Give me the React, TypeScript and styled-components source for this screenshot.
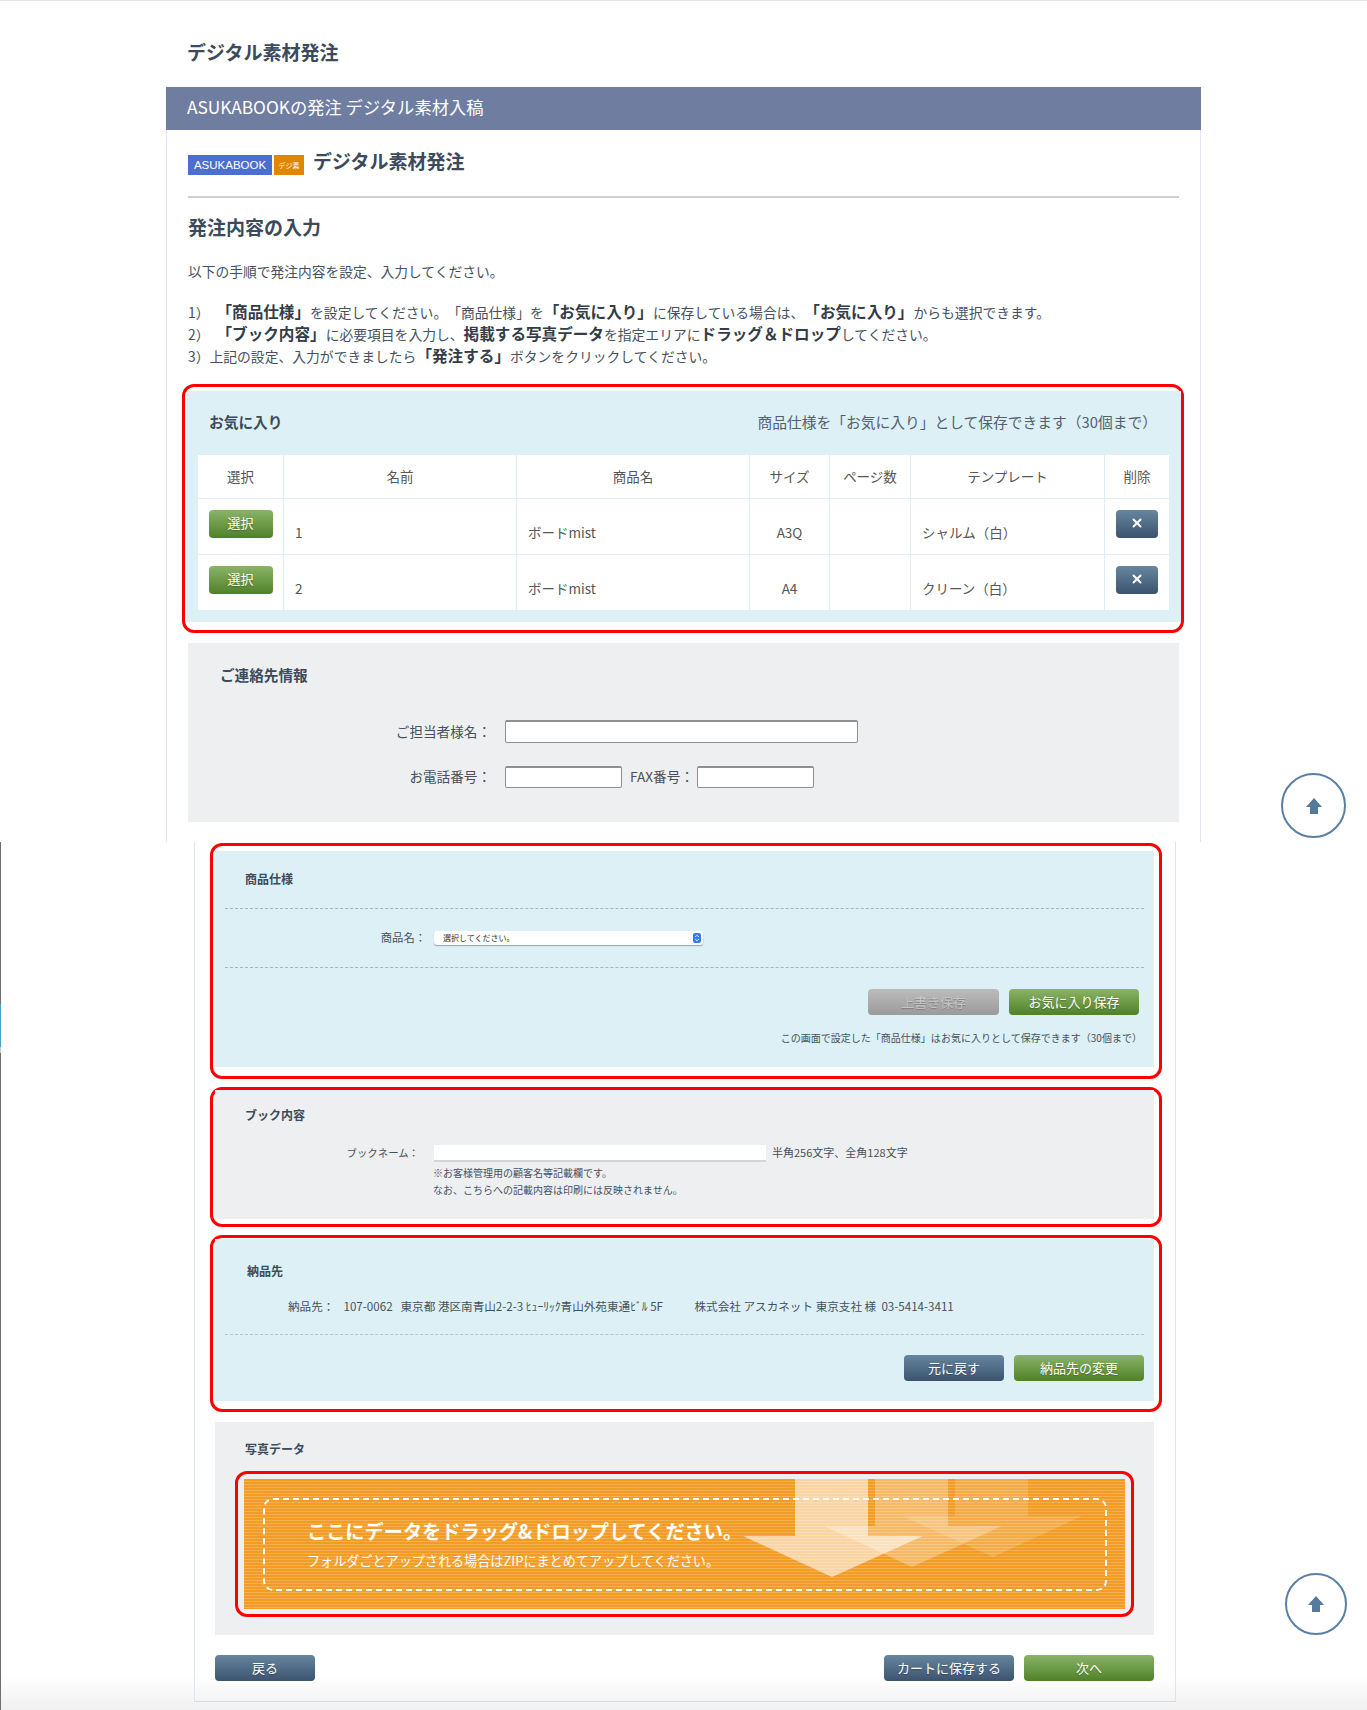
import React, { FC } from 'react';
import styled, { createGlobalStyle, css } from 'styled-components';
import { X } from 'lucide-react';

const GlobalStyle = createGlobalStyle`
  html, body {
    margin: 0;
    padding: 0;
    background: #fff;
  }
  body {
    font-family: "Noto Sans CJK JP", "Liberation Sans", sans-serif;
    color: #46505c;
    text-spacing-trim: space-all;
  }
`;

const tones = {
  green: css`background: linear-gradient(#8bb368, #4f8127); color: #fff;`,
  navy: css`background: linear-gradient(#66869f, #3c536f); color: #fff;`,
  gray: css`background: linear-gradient(#bcbcbc, #9a9a9a); color: #c6c6c6;`,
};

const App: FC = () => (
  <Page>
    <GlobalStyle />
    <SideSliver />
    <FirstSheet>
      <PageTitle>デジタル素材発注</PageTitle>
      <Banner>ASUKABOOKの発注 デジタル素材入稿</Banner>
      <FirstBody>
        <LogoRow>
          <LogoBlue>ASUKABOOK</LogoBlue>
          <LogoOrange>デジ素</LogoOrange>
          <LogoTitle>デジタル素材発注</LogoTitle>
        </LogoRow>
        <Rule />
        <SubTitle>発注内容の入力</SubTitle>
        <Intro>以下の手順で発注内容を設定、入力してください。</Intro>
        <Steps>
          <li>1）<b>「商品仕様」</b>を設定してください。「商品仕様」を<b>「お気に入り」</b>に保存している場合は、<b>「お気に入り」</b>からも選択できます。</li>
          <li>2）<b>「ブック内容」</b>に必要項目を入力し、<b>掲載する写真データ</b>を指定エリアに<b>ドラッグ＆ドロップ</b>してください。</li>
          <li>3）上記の設定、入力ができましたら<b>「発注する」</b>ボタンをクリックしてください。</li>
        </Steps>

        <FavouritesFrame>
          <FavouritesPanel>
            <FavouritesHead>
              <FavouritesTitle>お気に入り</FavouritesTitle>
              <FavouritesHint>商品仕様を「お気に入り」として保存できます（30個まで）</FavouritesHint>
            </FavouritesHead>
            <FavTable>
              <colgroup>
                {[86, 233, 233, 80, 81, 194, 65].map((w, i) => <col key={i} width={w} />)}
              </colgroup>
              <thead>
                <tr>
                  {['選択', '名前', '商品名', 'サイズ', 'ページ数', 'テンプレート', '削除'].map((h) => <th key={h}>{h}</th>)}
                </tr>
              </thead>
              <tbody>
                <FavRow no="1" size="A3Q" template="シャルム（白）" />
                <FavRow no="2" size="A4" template="クリーン（白）" />
              </tbody>
            </FavTable>
          </FavouritesPanel>
        </FavouritesFrame>

        <ContactPanel>
          <ContactTitle>ご連絡先情報</ContactTitle>
          <ContactRow $h={23}>
            <ContactLabel>ご担当者様名：</ContactLabel>
            <TextBox $w={353} />
          </ContactRow>
          <ContactRow $h={22}>
            <ContactLabel>お電話番号：</ContactLabel>
            <TextBox $w={117} />
            <FaxLabel>FAX番号：</FaxLabel>
            <TextBox $w={117} />
          </ContactRow>
        </ContactPanel>
      </FirstBody>
    </FirstSheet>

    <SecondSheet>
      <Frame $pad="5px 5px 9px 2px">
        <SpecPanel>
          <SpecTitle>商品仕様</SpecTitle>
          <Dashed />
          <SpecField>
            <FieldLabel $gap={8} $size={11.3}>商品名：</FieldLabel>
            <FakeSelect>
              選択してください。
              <SelectStepper viewBox="0 0 8 10">
                <rect width="8" height="10" rx="2" fill="#2f7ff0" />
                <path d="M2.2 4 4 2.2 5.8 4M2.2 6 4 7.8 5.8 6" fill="none" stroke="#fff" strokeWidth="0.9" />
              </SelectStepper>
            </FakeSelect>
          </SpecField>
          <Dashed />
          <ActionRow $top={21} $right={15}>
            <ActionButton $tone="gray" $w={131}>上書き保存</ActionButton>
            <ActionButton $tone="green" $w={130}>お気に入り保存</ActionButton>
          </ActionRow>
          <SpecNote>この画面で設定した「商品仕様」はお気に入りとして保存できます（30個まで）</SpecNote>
        </SpecPanel>
      </Frame>

      <Frame $pad="0 5px 5px 2px" $gap={8}>
        <BookPanel>
          <SpecTitle>ブック内容</SpecTitle>
          <BookField>
            <FieldLabel $gap={15} $size={10.4}>ブックネーム：</FieldLabel>
            <BookInput />
            <BookLimit>半角256文字、全角128文字</BookLimit>
          </BookField>
          <BookNotes>
            ※お客様管理用の顧客名等記載欄です。<br />
            なお、こちらへの記載内容は印刷には反映されません。
          </BookNotes>
        </BookPanel>
      </Frame>

      <Frame $pad="1px 5px 8px 2px" $gap={8}>
        <DeliveryPanel>
          <DeliveryTitle>納品先</DeliveryTitle>
          <AddressRow>
            <AddressPart $w={55.5}>納品先：</AddressPart>
            <AddressPart $w={57}>107-0062</AddressPart>
            <AddressPart $w={294}>東京都 港区南青山2-2-3 ﾋｭｰﾘｯｸ青山外苑東通ﾋﾞﾙ 5F</AddressPart>
            <AddressPart>株式会社 アスカネット 東京支社 様&nbsp;&nbsp;03-5414-3411</AddressPart>
          </AddressRow>
          <DottedLight />
          <ActionRow $top={20} $right={10}>
            <ActionButton $tone="navy" $w={100}>元に戻す</ActionButton>
            <ActionButton $tone="green" $w={130}>納品先の変更</ActionButton>
          </ActionRow>
        </DeliveryPanel>
      </Frame>

      <PhotoPanel>
        <SpecTitle>写真データ</SpecTitle>
        <DropFrame>
          <DropZone>
            <DropArrows viewBox="0 0 881 130">
              <polygon points="711,0 784,0 784,37 838,37 749,78 658,37 711,37" fill="#fff" opacity="0.16" />
              <polygon points="631,0 704,0 704,47 758,47 668,88 580,47 631,47" fill="#fff" opacity="0.3" />
              <polygon points="551,0 624,0 624,57 679,57 588,98 499,57 551,57" fill="#fff" opacity="0.58" />
            </DropArrows>
            <DropBorder>
              <DropTitle>ここにデータをドラッグ&amp;ドロップしてください。</DropTitle>
              <DropSub>フォルダごとアップされる場合はZIPにまとめてアップしてください。</DropSub>
            </DropBorder>
          </DropZone>
        </DropFrame>
      </PhotoPanel>

      <FooterButtons>
        <ActionButton $tone="navy" $w={100}>戻る</ActionButton>
        <FooterRight>
          <ActionButton $tone="navy" $w={130}>カートに保存する</ActionButton>
          <ActionButton $tone="green" $w={130}>次へ</ActionButton>
        </FooterRight>
      </FooterButtons>
    </SecondSheet>

    <ScrollTop $top={772} $left={1281} $size={65}><UpArrow /></ScrollTop>
    <ScrollTop $top={1572} $left={1285} $size={62}><UpArrow /></ScrollTop>
  </Page>
);

const FavRow: FC<{ no: string; size: string; template: string }> = ({ no, size, template }) => (
  <tr>
    <ButtonCell><SmallButton $tone="green" $w={64}>選択</SmallButton></ButtonCell>
    <td>{no}</td>
    <td>ボードmist</td>
    <CenterCell>{size}</CenterCell>
    <td />
    <td>{template}</td>
    <ButtonCell><SmallButton $tone="navy" $w={42}><X size={14} strokeWidth={3.4} /></SmallButton></ButtonCell>
  </tr>
);

const UpArrow: FC = () => (
  <svg width="16" height="16" viewBox="0 0 16 16">
    <polygon points="8,0 16,9 12,9 12,16 4,16 4,9 0,9" fill="#55799f" />
  </svg>
);

const Page = styled.div`
  position: relative;
  width: 1367px;
  height: 1710px;
  overflow: hidden;
  box-sizing: border-box;
  border-top: 1px solid #e4e4e4;
  background: linear-gradient(to bottom, #fff 1675px, #f0f0f0 1710px);
`;

const SideSliver = styled.div`
  position: absolute;
  left: 0;
  top: 841px;
  width: 1px;
  height: 869px;
  background: linear-gradient(to bottom, #707070 162px, #4a9fc9 162px, #4a9fc9 205px, #ccc 205px, #ccc 211px, #707070 211px);
`;

const FirstSheet = styled.div`
  margin-left: 166px;
  width: 1035px;
  height: 841px;
  display: flex;
  flex-direction: column;
`;

const PageTitle = styled.h1`
  margin: 0;
  height: 86px;
  box-sizing: border-box;
  padding: 37px 0 0 21px;
  font-size: 19px;
  line-height: 28px;
  font-weight: 700;
  color: #3b4a5c;
`;

const Banner = styled.div`
  height: 43px;
  padding-left: 21px;
  background: #6f7da1;
  color: #fff;
  font-size: 17.3px;
  line-height: 40px;
`;

const FirstBody = styled.div`
  flex: 1;
  padding: 0 21px;
  border-left: 1px solid #e2e7ee;
  border-right: 1px solid #e2e7ee;
`;

const LogoRow = styled.div`
  display: flex;
  height: 66px;
  padding-top: 19px;
  box-sizing: border-box;
`;

const LogoBlue = styled.div`
  width: 84px;
  height: 20px;
  margin-top: 6px;
  background: #4a6fd0;
  color: #fff;
  font-family: "Liberation Sans", sans-serif;
  font-size: 11.5px;
  line-height: 20px;
  text-align: center;
`;

const LogoOrange = styled.div`
  width: 30px;
  height: 20px;
  margin: 6px 9px 0 2px;
  background: #e08600;
  color: #fff;
  font-size: 7px;
  line-height: 20px;
  text-align: center;
`;

const LogoTitle = styled.div`
  font-size: 19px;
  line-height: 24px;
  font-weight: 700;
  color: #3b4a5c;
`;

const Rule = styled.div`
  height: 2px;
  background: #cdd1d5;
`;

const SubTitle = styled.h2`
  margin: 17px 0 0;
  font-size: 19px;
  line-height: 24px;
  font-weight: 700;
  color: #3b4a5c;
`;

const Intro = styled.p`
  margin: 22px 0 0;
  font-size: 13.75px;
  line-height: 20px;
`;

const Steps = styled.ol`
  margin: 20px 0 0;
  padding: 0;
  list-style: none;
  font-size: 13.8px;
  line-height: 22px;
  white-space: nowrap;

  li {
    height: 22px;
  }

  b {
    font-size: 15.6px;
    line-height: 1;
    font-weight: 700;
    color: #333c47;
  }

  li:not(:last-child) > b:first-of-type {
    margin-left: 7px;
  }
`;

const Frame = styled.div<{ $pad: string; $gap?: number }>`
  box-sizing: border-box;
  margin-top: ${(p) => p.$gap ?? 0}px;
  width: 952px;
  padding: ${(p) => p.$pad};
  border: 3px solid #f00;
  border-radius: 12px;
`;

const FavouritesFrame = styled(Frame).attrs({ $pad: '4px 0 8px 2px' })`
  margin: 17px 0 0 -6px;
  width: 1002px;
`;

const FavouritesPanel = styled.div`
  background: #dcf0f6;
  padding: 0 11px 11px 10px;
`;

const FavouritesHead = styled.div`
  display: flex;
  align-items: center;
  justify-content: space-between;
  height: 63px;
  padding: 0 13px 3px 12px;
  box-sizing: border-box;
`;

const FavouritesTitle = styled.div`
  font-size: 14.7px;
  font-weight: 700;
  color: #3b4a5c;
`;

const FavouritesHint = styled.div`
  font-size: 14.75px;
  color: #52606e;
`;

const FavTable = styled.table`
  width: 972px;
  table-layout: fixed;
  border-collapse: collapse;
  background: #fff;
  font-size: 13.5px;
  color: #555;

  th, td {
    border: 1px solid #dcf0f6;
    padding: 0;
  }
  th {
    height: 44px;
    padding-bottom: 2px;
    box-sizing: border-box;
    font-weight: 400;
    text-align: center;
  }
  td {
    height: 56px;
    box-sizing: border-box;
    padding: 23px 0 0 11px;
    line-height: 20px;
    vertical-align: top;
  }
`;

const ButtonCell = styled.td`
  && {
    padding: 11px 0 0;
    text-align: center;
  }
`;

const CenterCell = styled.td`
  && {
    padding-left: 0;
    text-align: center;
  }
`;

const ActionButton = styled.div<{ $tone: keyof typeof tones; $w: number }>`
  ${(p) => tones[p.$tone]}
  width: ${(p) => p.$w}px;
  height: 26px;
  padding-bottom: 2px;
  box-sizing: border-box;
  display: flex;
  align-items: center;
  justify-content: center;
  border-radius: 4px;
  font-size: 13px;
  text-shadow: 0 1px 1px rgba(0, 0, 0, 0.25);
  flex-shrink: 0;
`;

const SmallButton = styled(ActionButton)`
  height: 28px;
  margin: 0 auto;
`;

const ContactPanel = styled.div`
  margin-top: 10px;
  height: 179px;
  padding-top: 22px;
  box-sizing: border-box;
  background: #eeeff1;
`;

const ContactTitle = styled.div`
  padding-left: 32px;
  margin-bottom: 35px;
  font-size: 14.6px;
  line-height: 20px;
  font-weight: 700;
  color: #3b4a5c;
`;

const ContactRow = styled.div<{ $h: number }>`
  display: flex;
  align-items: center;
  height: ${(p) => p.$h}px;
  margin-bottom: 23px;
`;

const ContactLabel = styled.div`
  width: 303px;
  margin-right: 14px;
  padding-bottom: 2px;
  text-align: right;
  font-size: 13.6px;
`;

const FaxLabel = styled.div`
  margin: 0 3px 2px 8px;
  font-size: 13.6px;
`;

const TextBox = styled.input<{ $w: number }>`
  width: ${(p) => p.$w}px;
  height: 100%;
  box-sizing: border-box;
  padding: 0;
  background: #fff;
  border: 1px solid #8f8f8f;
  border-top-width: 2px;
  border-radius: 2px;
`;

const SecondSheet = styled.div`
  margin-left: 194px;
  width: 982px;
  height: 860px;
  box-sizing: border-box;
  padding: 1px 0 0 15px;
  border-left: 1px solid #dde4ec;
  border-right: 1px solid #dde4ec;
  border-bottom: 1px solid #d5dbe3;
`;

const SpecPanel = styled.div`
  height: 216px;
  padding-top: 18px;
  box-sizing: border-box;
  background: #dcf0f6;
`;

const SpecTitle = styled.div`
  padding-left: 30px;
  font-size: 12px;
  line-height: 20px;
  font-weight: 700;
  color: #3b4a5c;
`;

const Dashed = styled.div`
  margin: 19px 10px 0;
  border-top: 1px dashed #a9b4ba;

  & + div + & {
    margin-top: 0;
  }
`;

const SpecField = styled.div`
  display: flex;
  align-items: center;
  height: 58px;
  padding-bottom: 1px;
  box-sizing: border-box;
`;

const FieldLabel = styled.div<{ $gap: number; $size: number }>`
  width: ${(p) => 219 - p.$gap}px;
  margin-right: ${(p) => p.$gap}px;
  padding-bottom: 2px;
  text-align: right;
  font-size: ${(p) => p.$size}px;
  white-space: nowrap;
`;

const FakeSelect = styled.div`
  position: relative;
  width: 269px;
  height: 14px;
  padding-left: 9px;
  box-sizing: border-box;
  background: #fff;
  border-radius: 3px;
  box-shadow: 0 1px 1px rgba(60, 90, 110, 0.5);
  font-size: 8px;
  line-height: 14px;
  color: #333;
`;

const SelectStepper = styled.svg`
  position: absolute;
  right: 2px;
  top: 2px;
  width: 8px;
  height: 10px;
`;

const ActionRow = styled.div<{ $top: number; $right: number }>`
  display: flex;
  justify-content: flex-end;
  gap: 10px;
  margin-top: ${(p) => p.$top}px;
  padding-right: ${(p) => p.$right}px;
`;

const SpecNote = styled.div`
  margin-top: 13px;
  padding-right: 12px;
  text-align: right;
  font-size: 10.03px;
  line-height: 20px;
`;

const BookPanel = styled.div`
  height: 129px;
  padding-top: 15px;
  box-sizing: border-box;
  background: #eeeff1;
`;

const BookField = styled.div`
  display: flex;
  align-items: center;
  height: 17px;
  margin-top: 20px;
`;

const BookInput = styled.div`
  width: 332px;
  height: 17px;
  box-sizing: border-box;
  background: #fff;
  border-bottom: 2px solid #d4d4d4;
  flex-shrink: 0;
`;

const BookLimit = styled.div`
  margin-left: 6px;
  padding-bottom: 3px;
  font-size: 11px;
`;

const BookNotes = styled.div`
  margin: 2px 0 0 218px;
  font-size: 10px;
  line-height: 17px;
`;

const DeliveryPanel = styled.div`
  height: 162px;
  padding-top: 22px;
  box-sizing: border-box;
  background: #dcf0f6;
`;

const DeliveryTitle = styled(SpecTitle)`
  padding-left: 32px;
`;

const AddressRow = styled.div`
  display: flex;
  margin: 15px 0 0 73px;
  font-size: 11.6px;
  line-height: 20px;
  white-space: nowrap;
`;

const AddressPart = styled.span<{ $w?: number }>`
  ${(p) => (p.$w ? `width: ${p.$w}px;` : '')}
  flex-shrink: 0;
`;

const DottedLight = styled.div`
  margin: 18px 10px 0;
  border-top: 1px dashed #b9c6cc;
`;

const PhotoPanel = styled.div`
  margin: 10px 0 0 5px;
  width: 939px;
  height: 213px;
  padding-top: 17px;
  box-sizing: border-box;
  background: #eeeff1;
`;

const DropFrame = styled.div`
  margin: 12px 0 0 20px;
  width: 899px;
  height: 146px;
  box-sizing: border-box;
  padding: 5px 6px;
  border: 3px solid #f00;
  border-radius: 12px;
`;

const DropZone = styled.div`
  position: relative;
  height: 130px;
  padding: 19px 18px 18px 19px;
  box-sizing: border-box;
  background: repeating-linear-gradient(to bottom, #f29c25 0, #f29c25 2px, #f6b053 2px, #f6b053 3px);
`;

const DropArrows = styled.svg`
  position: absolute;
  left: 0;
  top: 0;
  width: 881px;
  height: 130px;
`;

const DropBorder = styled.div`
  position: relative;
  height: 93px;
  box-sizing: border-box;
  padding: 16px 0 0 42px;
  border: 2px dashed #fff;
  border-radius: 10px;
  color: #fff;
`;

const DropTitle = styled.div`
  font-size: 19.2px;
  line-height: 30px;
  font-weight: 700;
`;

const DropSub = styled.div`
  margin-top: 5px;
  font-size: 13.1px;
  line-height: 20px;
`;

const FooterButtons = styled.div`
  display: flex;
  justify-content: space-between;
  margin: 20px 0 0 5px;
  width: 939px;
`;

const FooterRight = styled.div`
  display: flex;
  gap: 10px;
`;

const ScrollTop = styled.div<{ $top: number; $left: number; $size: number }>`
  position: absolute;
  top: ${(p) => p.$top}px;
  left: ${(p) => p.$left}px;
  width: ${(p) => p.$size}px;
  height: ${(p) => p.$size}px;
  box-sizing: border-box;
  display: flex;
  align-items: center;
  justify-content: center;
  border: 2px solid #5a7fa5;
  border-radius: 50%;
  background: #fff;
`;

export default App;
